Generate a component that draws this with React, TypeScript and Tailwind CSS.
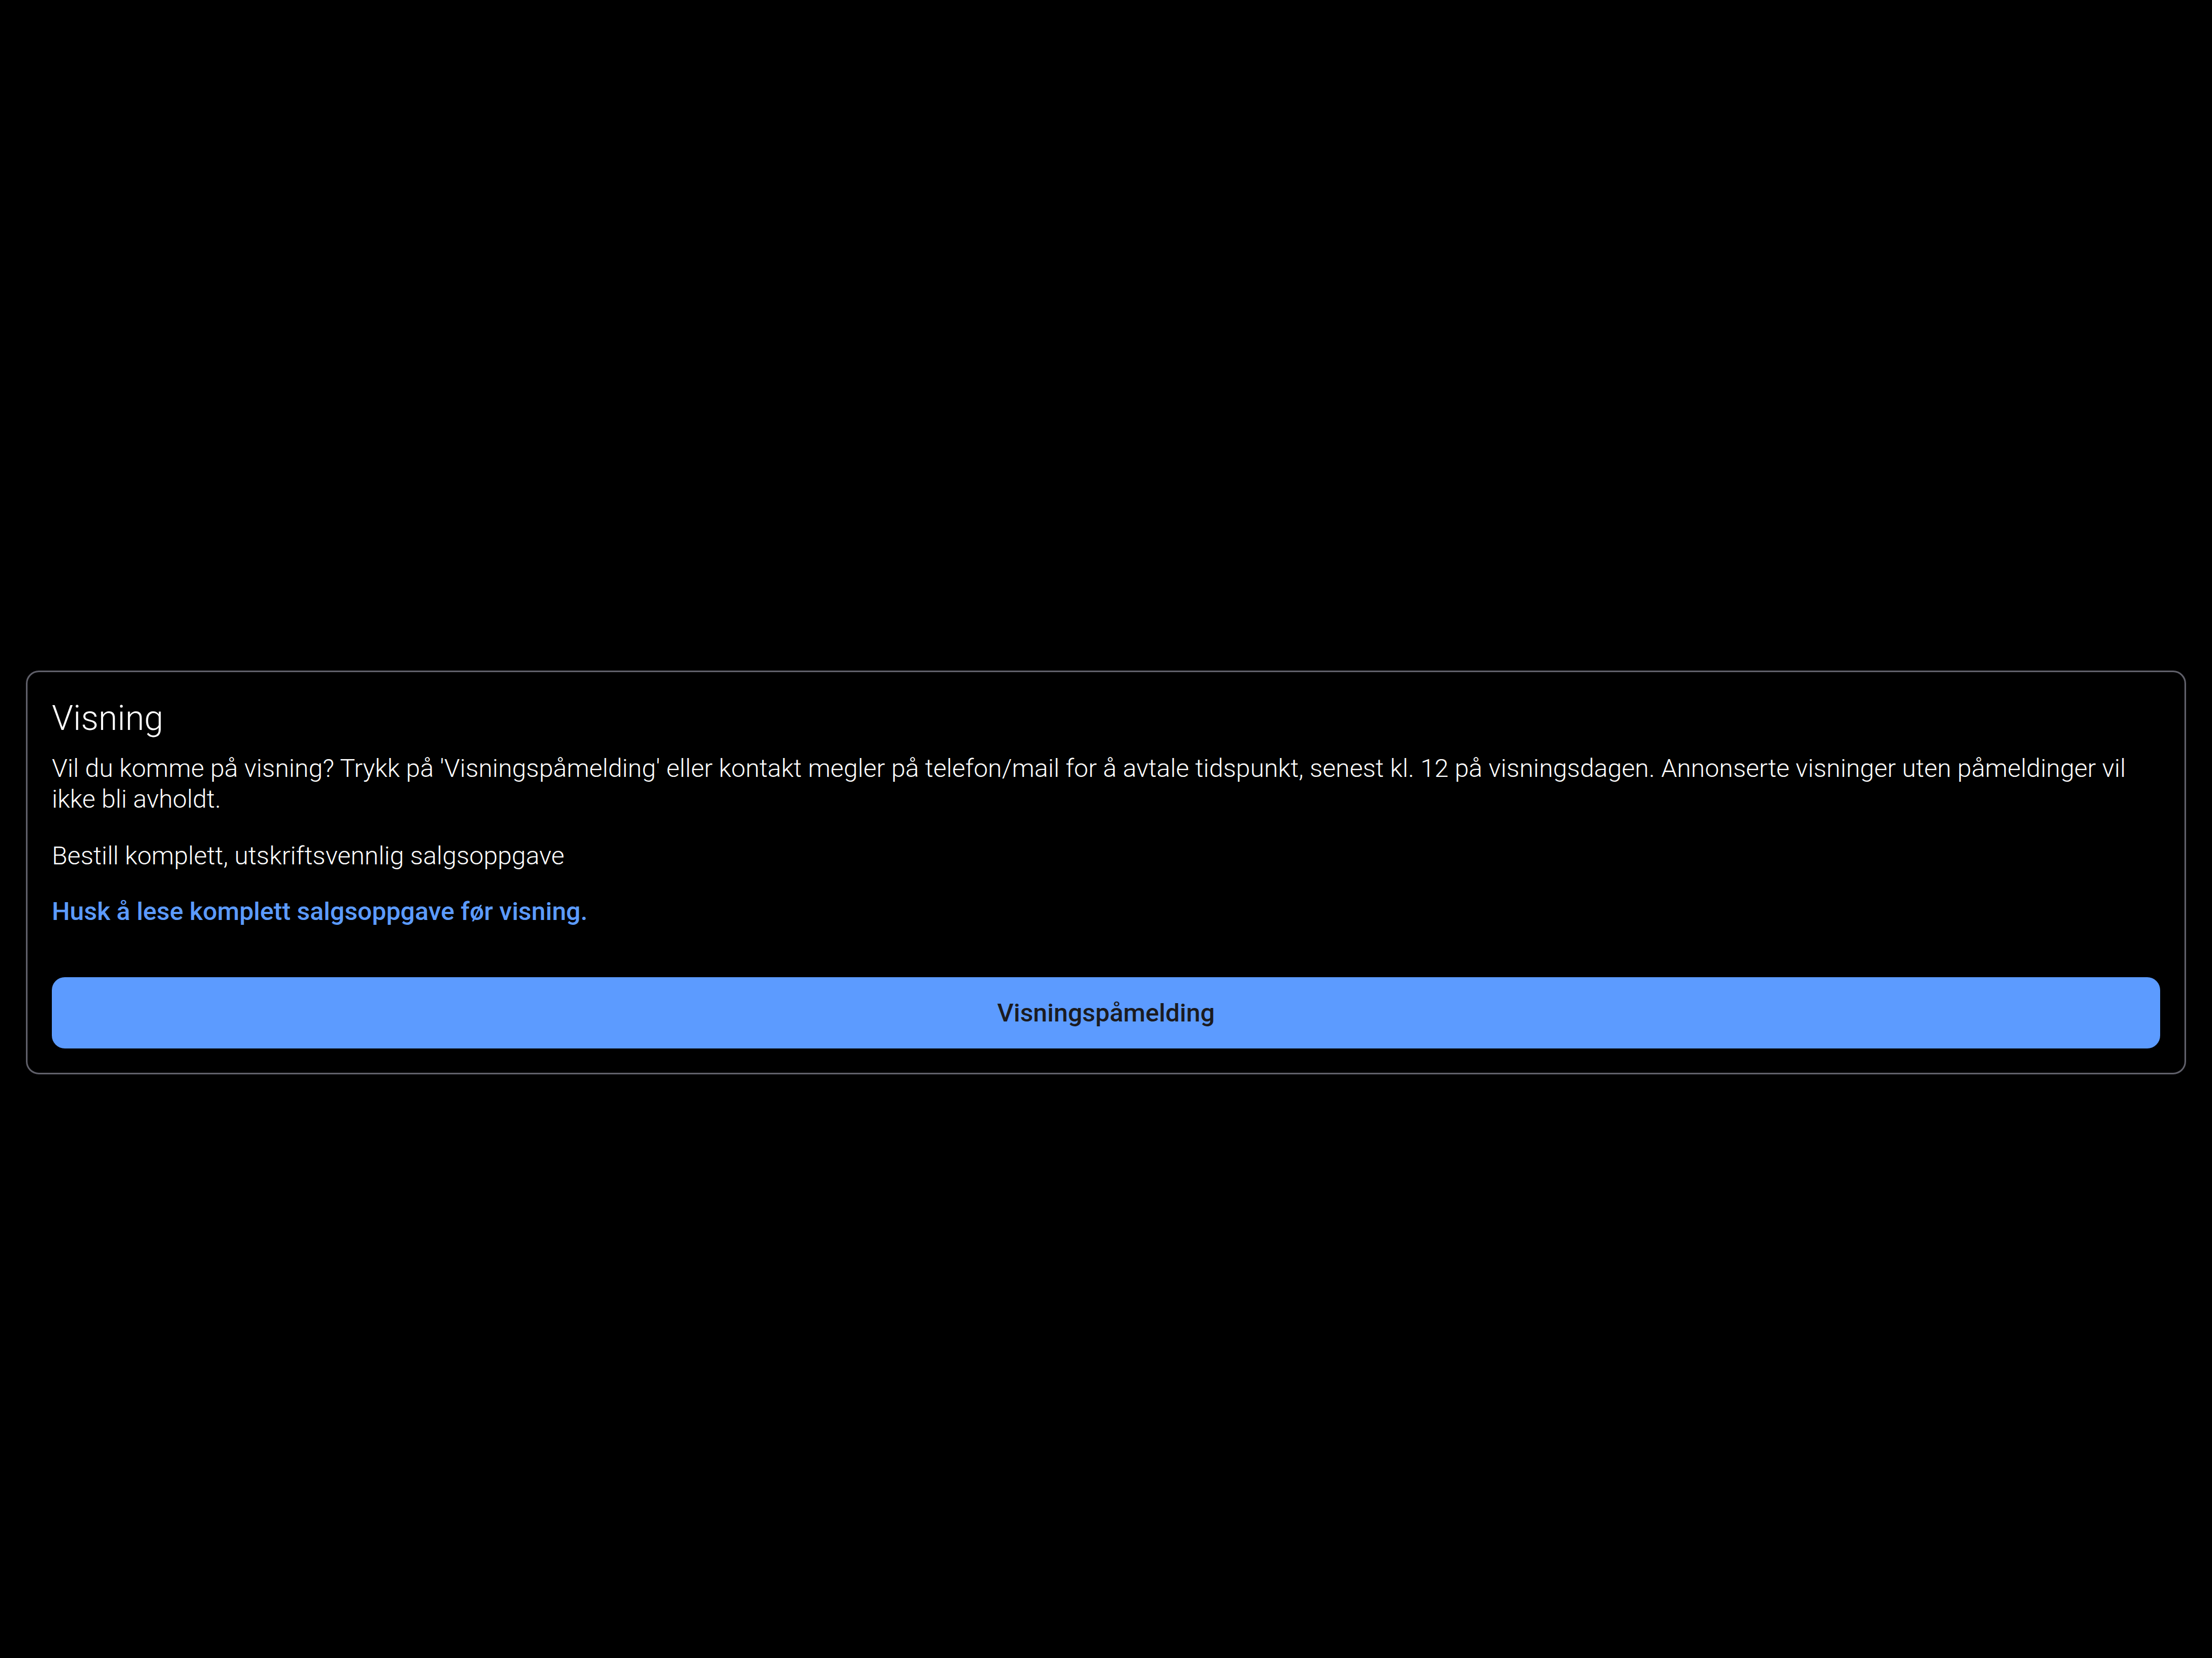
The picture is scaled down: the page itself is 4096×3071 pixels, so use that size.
export default function App() {
  return (
    <main className="flex min-h-screen flex-col justify-center bg-black px-12 pt-40 font-[Roboto,sans-serif] text-[47px] leading-[57px] font-light text-white">
      <section className="rounded-[24px] border-[3px] border-[#5f5f69] px-[45px] pt-12 pb-[45px]">
        <h2 className="text-[64px] leading-[75px]">Visning</h2>
        <p className="mt-[26px]">
          Vil du komme på visning? Trykk på 'Visningspåmelding' eller kontakt megler på telefon/mail for å avtale tidspunkt, senest kl. 12 på visningsdagen. Annonserte visninger uten påmeldinger vil ikke bli avholdt.
        </p>
        <p className="mt-12">
          <a href="#salgsoppgave">Bestill komplett, utskriftsvennlig salgsoppgave</a>
        </p>
        <p className="mt-[46px] font-medium text-[#5c9bff]">Husk å lese komplett salgsoppgave før visning.</p>
        <button type="button" className="mt-[94px] h-[132px] w-full rounded-[24px] bg-[#5c9bff] font-medium text-[#1b1b1f]">
          Visningspåmelding
        </button>
      </section>
    </main>
  );
}
